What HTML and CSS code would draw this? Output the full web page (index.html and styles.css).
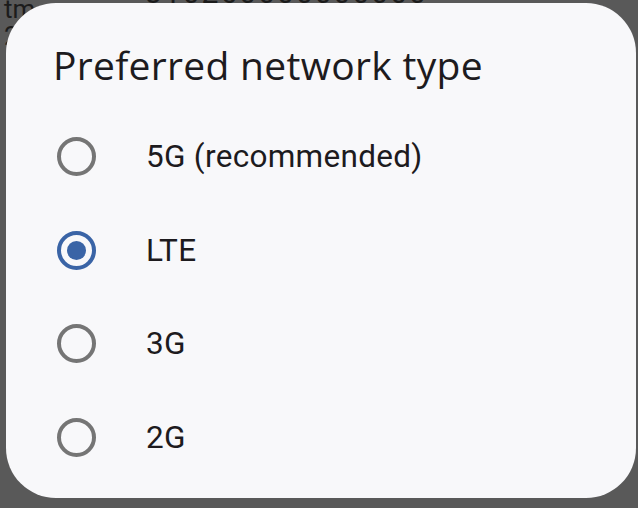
FILE: index.html
```html
<!DOCTYPE html>
<html>
<head>
<meta charset="utf-8">
<link rel="stylesheet" href="styles.css">
</head>
<body>
<div class="backdrop">
  <div class="bg-line bg-top">tm</div>
  <div class="bg-line bg-sub">2</div>
  <div class="bg-strip">310260000000000</div>
</div>
<div class="dialog">
  <h1 class="title">Preferred network type</h1>
  <div class="options">
    <div class="option"><span class="radio"></span><span class="label">5G (recommended)</span></div>
    <div class="option"><span class="radio checked"></span><span class="label">LTE</span></div>
    <div class="option"><span class="radio"></span><span class="label">3G</span></div>
    <div class="option"><span class="radio"></span><span class="label">2G</span></div>
  </div>
</div>
</body>
</html>
```
FILE: styles.css
```css
html, body {
  margin: 0;
  padding: 0;
  width: 638px;
  height: 508px;
  overflow: hidden;
  background: #595959;
}
.backdrop {
  font-family: Roboto, "Liberation Sans", sans-serif;
  color: #1c1c1c;
}
.bg-line {
  position: absolute;
  left: 4px;
  font-size: 26px;
  line-height: 24px;
}
.bg-top { top: -3px; }
.bg-sub { top: 24px; }
.bg-strip {
  position: absolute;
  left: 145px;
  top: -25px;
  font-size: 30px;
  letter-spacing: 2px;
}
.dialog {
  position: absolute;
  left: 6px;
  top: 3px;
  width: 630px;
  height: 495px;
  background: #f8f8fa;
  border-radius: 50px;
  box-sizing: border-box;
  padding: 37px 0 0 0;
}
.title {
  margin: 0 0 0 47px;
  font-family: "Open Sans", sans-serif;
  font-weight: 500;
  font-size: 39px;
  line-height: 50px;
  color: #1d1b1e;
  letter-spacing: 0.3px;
}
.options {
  display: flex;
  flex-direction: column;
  margin-top: 20px;
}
.option {
  display: flex;
  align-items: center;
  height: 93.5px;
}
.radio {
  box-sizing: border-box;
  width: 39px;
  height: 39px;
  margin-left: 51px;
  border: 4px solid #757575;
  border-radius: 50%;
  display: flex;
  align-items: center;
  justify-content: center;
}
.radio.checked {
  border-color: #3a64a6;
}
.radio.checked::after {
  content: "";
  width: 19px;
  height: 19px;
  border-radius: 50%;
  background: #3a64a6;
}
.label {
  margin-left: 50px;
  font-family: Roboto, sans-serif;
  font-size: 31.5px;
  letter-spacing: 0.3px;
  color: #1d1b1e;
}
```
